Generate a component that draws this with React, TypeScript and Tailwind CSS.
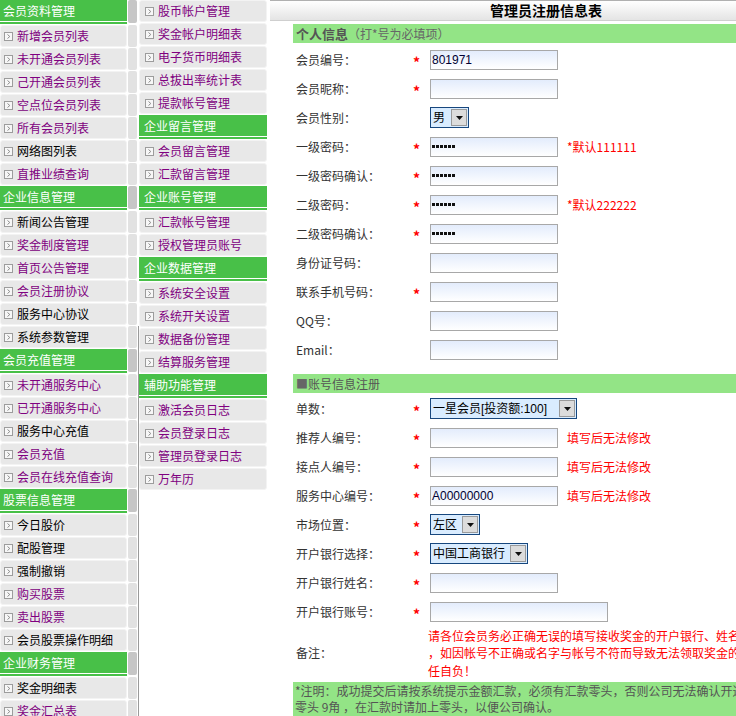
import React from "react";

type Item = { text: string; head?: boolean; visited?: boolean };

const leftMenu: Item[] = [
  { text: "会员资料管理", head: true },
  { text: "新增会员列表", visited: true },
  { text: "未开通会员列表", visited: true },
  { text: "己开通会员列表", visited: true },
  { text: "空点位会员列表", visited: true },
  { text: "所有会员列表", visited: true },
  { text: "网络图列表" },
  { text: "直推业绩查询", visited: true },
  { text: "企业信息管理", head: true },
  { text: "新闻公告管理" },
  { text: "奖金制度管理", visited: true },
  { text: "首页公告管理", visited: true },
  { text: "会员注册协议", visited: true },
  { text: "服务中心协议" },
  { text: "系统参数管理" },
  { text: "会员充值管理", head: true },
  { text: "未开通服务中心", visited: true },
  { text: "已开通服务中心", visited: true },
  { text: "服务中心充值" },
  { text: "会员充值", visited: true },
  { text: "会员在线充值查询", visited: true },
  { text: "股票信息管理", head: true },
  { text: "今日股价" },
  { text: "配股管理" },
  { text: "强制撤销" },
  { text: "购买股票", visited: true },
  { text: "卖出股票", visited: true },
  { text: "会员股票操作明细" },
  { text: "企业财务管理", head: true },
  { text: "奖金明细表" },
  { text: "奖金汇总表", visited: true },
];

const rightMenu: Item[] = [
  { text: "股币帐户管理", visited: true },
  { text: "奖金帐户明细表", visited: true },
  { text: "电子货币明细表", visited: true },
  { text: "总拔出率统计表", visited: true },
  { text: "提款帐号管理", visited: true },
  { text: "企业留言管理", head: true },
  { text: "会员留言管理", visited: true },
  { text: "汇款留言管理", visited: true },
  { text: "企业账号管理", head: true },
  { text: "汇款帐号管理", visited: true },
  { text: "授权管理员账号", visited: true },
  { text: "企业数据管理", head: true },
  { text: "系统安全设置", visited: true },
  { text: "系统开关设置", visited: true },
  { text: "数据备份管理", visited: true },
  { text: "结算服务管理", visited: true },
  { text: "辅助功能管理", head: true },
  { text: "激活会员日志", visited: true },
  { text: "会员登录日志", visited: true },
  { text: "管理员登录日志", visited: true },
  { text: "万年历", visited: true },
];

const Arrow = () => (
  <svg width="9" height="9" viewBox="0 0 9 9" className="shrink-0">
    <rect x="0.5" y="0.5" width="8" height="8" fill="#f7f7f7" stroke="#9c9c9c" />
    <path d="M3.5 2.5 L5.8 4.5 L3.5 6.5" fill="none" stroke="#8c8c8c" />
  </svg>
);

const MenuRow = ({ item, pad }: { item: Item; pad: string }) =>
  item.head ? (
    <div className="h-[25px] shrink-0">
      <div className={`h-[21px] bg-[#48c048] text-[12px] leading-[21px] text-white ${pad}`}>{item.text}</div>
      <div className="mt-[1px] h-[2px] bg-[#48c048]" />
    </div>
  ) : (
    <div className="h-[23px] shrink-0 pb-[1px]">
      <div className={`flex h-[22px] items-center gap-[4px] rounded-[3px] border border-[#f3f3f3] bg-[#e8e8e8] ${pad}`}>
        <Arrow />
        <span className={`text-[12px] ${item.visited ? "text-[#800080]" : "text-black"}`}>{item.text}</span>
      </div>
    </div>
  );

// sliver of the hidden menu column between the two visible ones
const StripRow = ({ item, line }: { item: Item; line: boolean }) => (
  <div
    className={clsxLite(
      "shrink-0 pl-[1px]",
      item.head ? "h-[25px]" : "h-[23px] pb-[1px]",
      line ? "border-r border-[#9a9a9a] pr-[1px]" : "pr-[2px]"
    )}
  >
    <div className={item.head ? "h-[23px] rounded-[2px] bg-[#c6c6c6]" : "h-[22px] rounded-[2px] bg-[#e2e2e2]"} />
  </div>
);

function clsxLite(...parts: string[]) {
  return parts.join(" ");
}

const Star = () => <span className="text-[14px] font-bold leading-none text-[#ff0000]">*</span>;

const Input = ({ w = "w-[128px]", value, dots }: { w?: string; value?: string; dots?: boolean }) => (
  <div
    className={`flex h-[20px] items-center border border-[#a8a8a8] bg-[linear-gradient(to_bottom,#e3ecfc,#ffffff)] pl-[1px] font-['Liberation_Sans','Noto_Sans_CJK_SC',sans-serif] text-[12px] text-[#000033] ${w}`}
  >
    {dots && (
      <div className="flex gap-[1px]">
        {[0, 1, 2, 3, 4, 5].map((i) => (
          <span key={i} className="h-[3px] w-[3px] bg-[#111]" />
        ))}
      </div>
    )}
    {value}
  </div>
);

const Select = ({ w, text }: { w: string; text: string }) => (
  <div className={`flex h-[21px] items-center border border-[#17477e] bg-[#d9ecff] ${w}`}>
    <span className="flex-1 truncate pl-[2px] font-['Liberation_Sans','Noto_Sans_CJK_SC',sans-serif] text-[12px] text-black">
      {text}
    </span>
    <span className="mr-[1px] flex h-[17px] w-[16px] items-center justify-center border border-[#9a9a9a] bg-[#dcdcdc]">
      <svg width="7" height="4" viewBox="0 0 7 4">
        <path d="M0 0 H7 L3.5 4 Z" fill="#111" />
      </svg>
    </span>
  </div>
);

type Row = { label: string; star?: boolean; field: React.ReactNode; hint?: string };

const FormRow = ({ row }: { row: Row }) => (
  <div className="flex h-[29px] items-center">
    <div className="w-[117px] shrink-0 pl-[3px] text-[12px] text-[#333]">{row.label}</div>
    <div className="w-[20px] shrink-0 pl-[3px] pt-[3px]">{row.star && <Star />}</div>
    <div className="flex items-center">
      {row.field}
      {row.hint && <span className="ml-[9px] whitespace-nowrap text-[12px] text-[#ff0000]">{row.hint}</span>}
    </div>
  </div>
);

const personal: Row[] = [
  { label: "会员编号：", star: true, field: <Input value="801971" /> },
  { label: "会员昵称：", star: true, field: <Input /> },
  { label: "会员性别：", field: <Select w="w-[39px]" text="男" /> },
  { label: "一级密码：", star: true, field: <Input dots />, hint: "*默认111111" },
  { label: "一级密码确认：", star: true, field: <Input dots /> },
  { label: "二级密码：", star: true, field: <Input dots />, hint: "*默认222222" },
  { label: "二级密码确认：", star: true, field: <Input dots /> },
  { label: "身份证号码：", field: <Input /> },
  { label: "联系手机号码：", star: true, field: <Input /> },
  { label: "QQ号：", field: <Input /> },
  { label: "Email：", field: <Input /> },
];

const account: Row[] = [
  { label: "单数：", star: true, field: <Select w="w-[147px]" text="一星会员[投资额:100]" /> },
  { label: "推荐人编号：", star: true, field: <Input />, hint: "填写后无法修改" },
  { label: "接点人编号：", star: true, field: <Input />, hint: "填写后无法修改" },
  { label: "服务中心编号：", star: true, field: <Input value="A00000000" />, hint: "填写后无法修改" },
  { label: "市场位置：", star: true, field: <Select w="w-[50px]" text="左区" /> },
  { label: "开户银行选择：", star: true, field: <Select w="w-[98px]" text="中国工商银行" /> },
  { label: "开户银行姓名：", star: true, field: <Input /> },
  { label: "开户银行账号：", star: true, field: <Input w="w-[178px]" /> },
];

export default function App() {
  return (
    <div className="flex h-[716px] w-[736px] overflow-hidden bg-white font-['Noto_Sans_CJK_SC',sans-serif]">
      <div className="flex w-[127px] shrink-0 flex-col">
        {leftMenu.map((item, i) => (
          <MenuRow key={i} item={item} pad="pl-[3px]" />
        ))}
      </div>
      <div className="flex w-[12px] shrink-0 flex-col">
        {leftMenu.map((item, i) => (
          <StripRow key={i} item={item} line={i >= 14} />
        ))}
      </div>
      <div className="flex w-[128px] shrink-0 flex-col">
        {rightMenu.map((item, i) => (
          <MenuRow key={i} item={item} pad="pl-[5px]" />
        ))}
      </div>
      <div className="w-[3px] shrink-0" />
      <div className="flex-1 overflow-hidden">
        <div className="w-[552px]">
          <div className="h-[21px] border-t border-b border-t-[#b0b0b0] border-b-[#cfcfcf] bg-[linear-gradient(to_bottom,#ffffff,#e4e4e4)] text-center text-[14px] font-bold leading-[19px] text-black">
            管理员注册信息表
          </div>
          <div className="ml-[23px] mt-[3px] w-[529px]">
            <div className="flex h-[19px] items-center bg-[#93e486] pl-[3px]">
              <span className="text-[13px] font-bold text-[#555]">个人信息</span>
              <span className="text-[12px] text-[#666]">（打*号为必填项）</span>
            </div>
            <div className="mt-[2px]">
              {personal.map((r, i) => (
                <FormRow key={i} row={r} />
              ))}
            </div>
            <div className="mt-[10px] flex h-[19px] items-center bg-[#93e486] pl-[3px] text-[12px] text-[#555]">
              <span className="text-[#666]">■</span>账号信息注册
            </div>
            <div className="mt-[1px]">
              {account.map((r, i) => (
                <FormRow key={i} row={r} />
              ))}
            </div>
            <div className="flex h-[54px] items-center">
              <div className="w-[117px] shrink-0 pl-[3px] text-[12px] text-[#333]">备注：</div>
              <div className="w-[18px] shrink-0" />
              <div className="whitespace-nowrap text-[12px] leading-[17.5px] text-[#ff0000]">
                请各位会员务必正确无误的填写接收奖金的开户银行、姓名等资料
                <br />
                ，如因帐号不正确或名字与帐号不符而导致无法领取奖金的，责
                <br />
                任自负！
              </div>
            </div>
            <div className="mt-[2px] h-[34px] whitespace-nowrap bg-[#93e486] pl-[2px] pt-[1px] text-[12px] leading-[16px] text-[#555]">
              *注明：成功提交后请按系统提示金额汇款，必须有汇款零头，否则公司无法确认开通，如汇款
              <br />
              零头 9角 ，在汇款时请加上零头，以便公司确认。
            </div>
          </div>
        </div>
      </div>
    </div>
  );
}
